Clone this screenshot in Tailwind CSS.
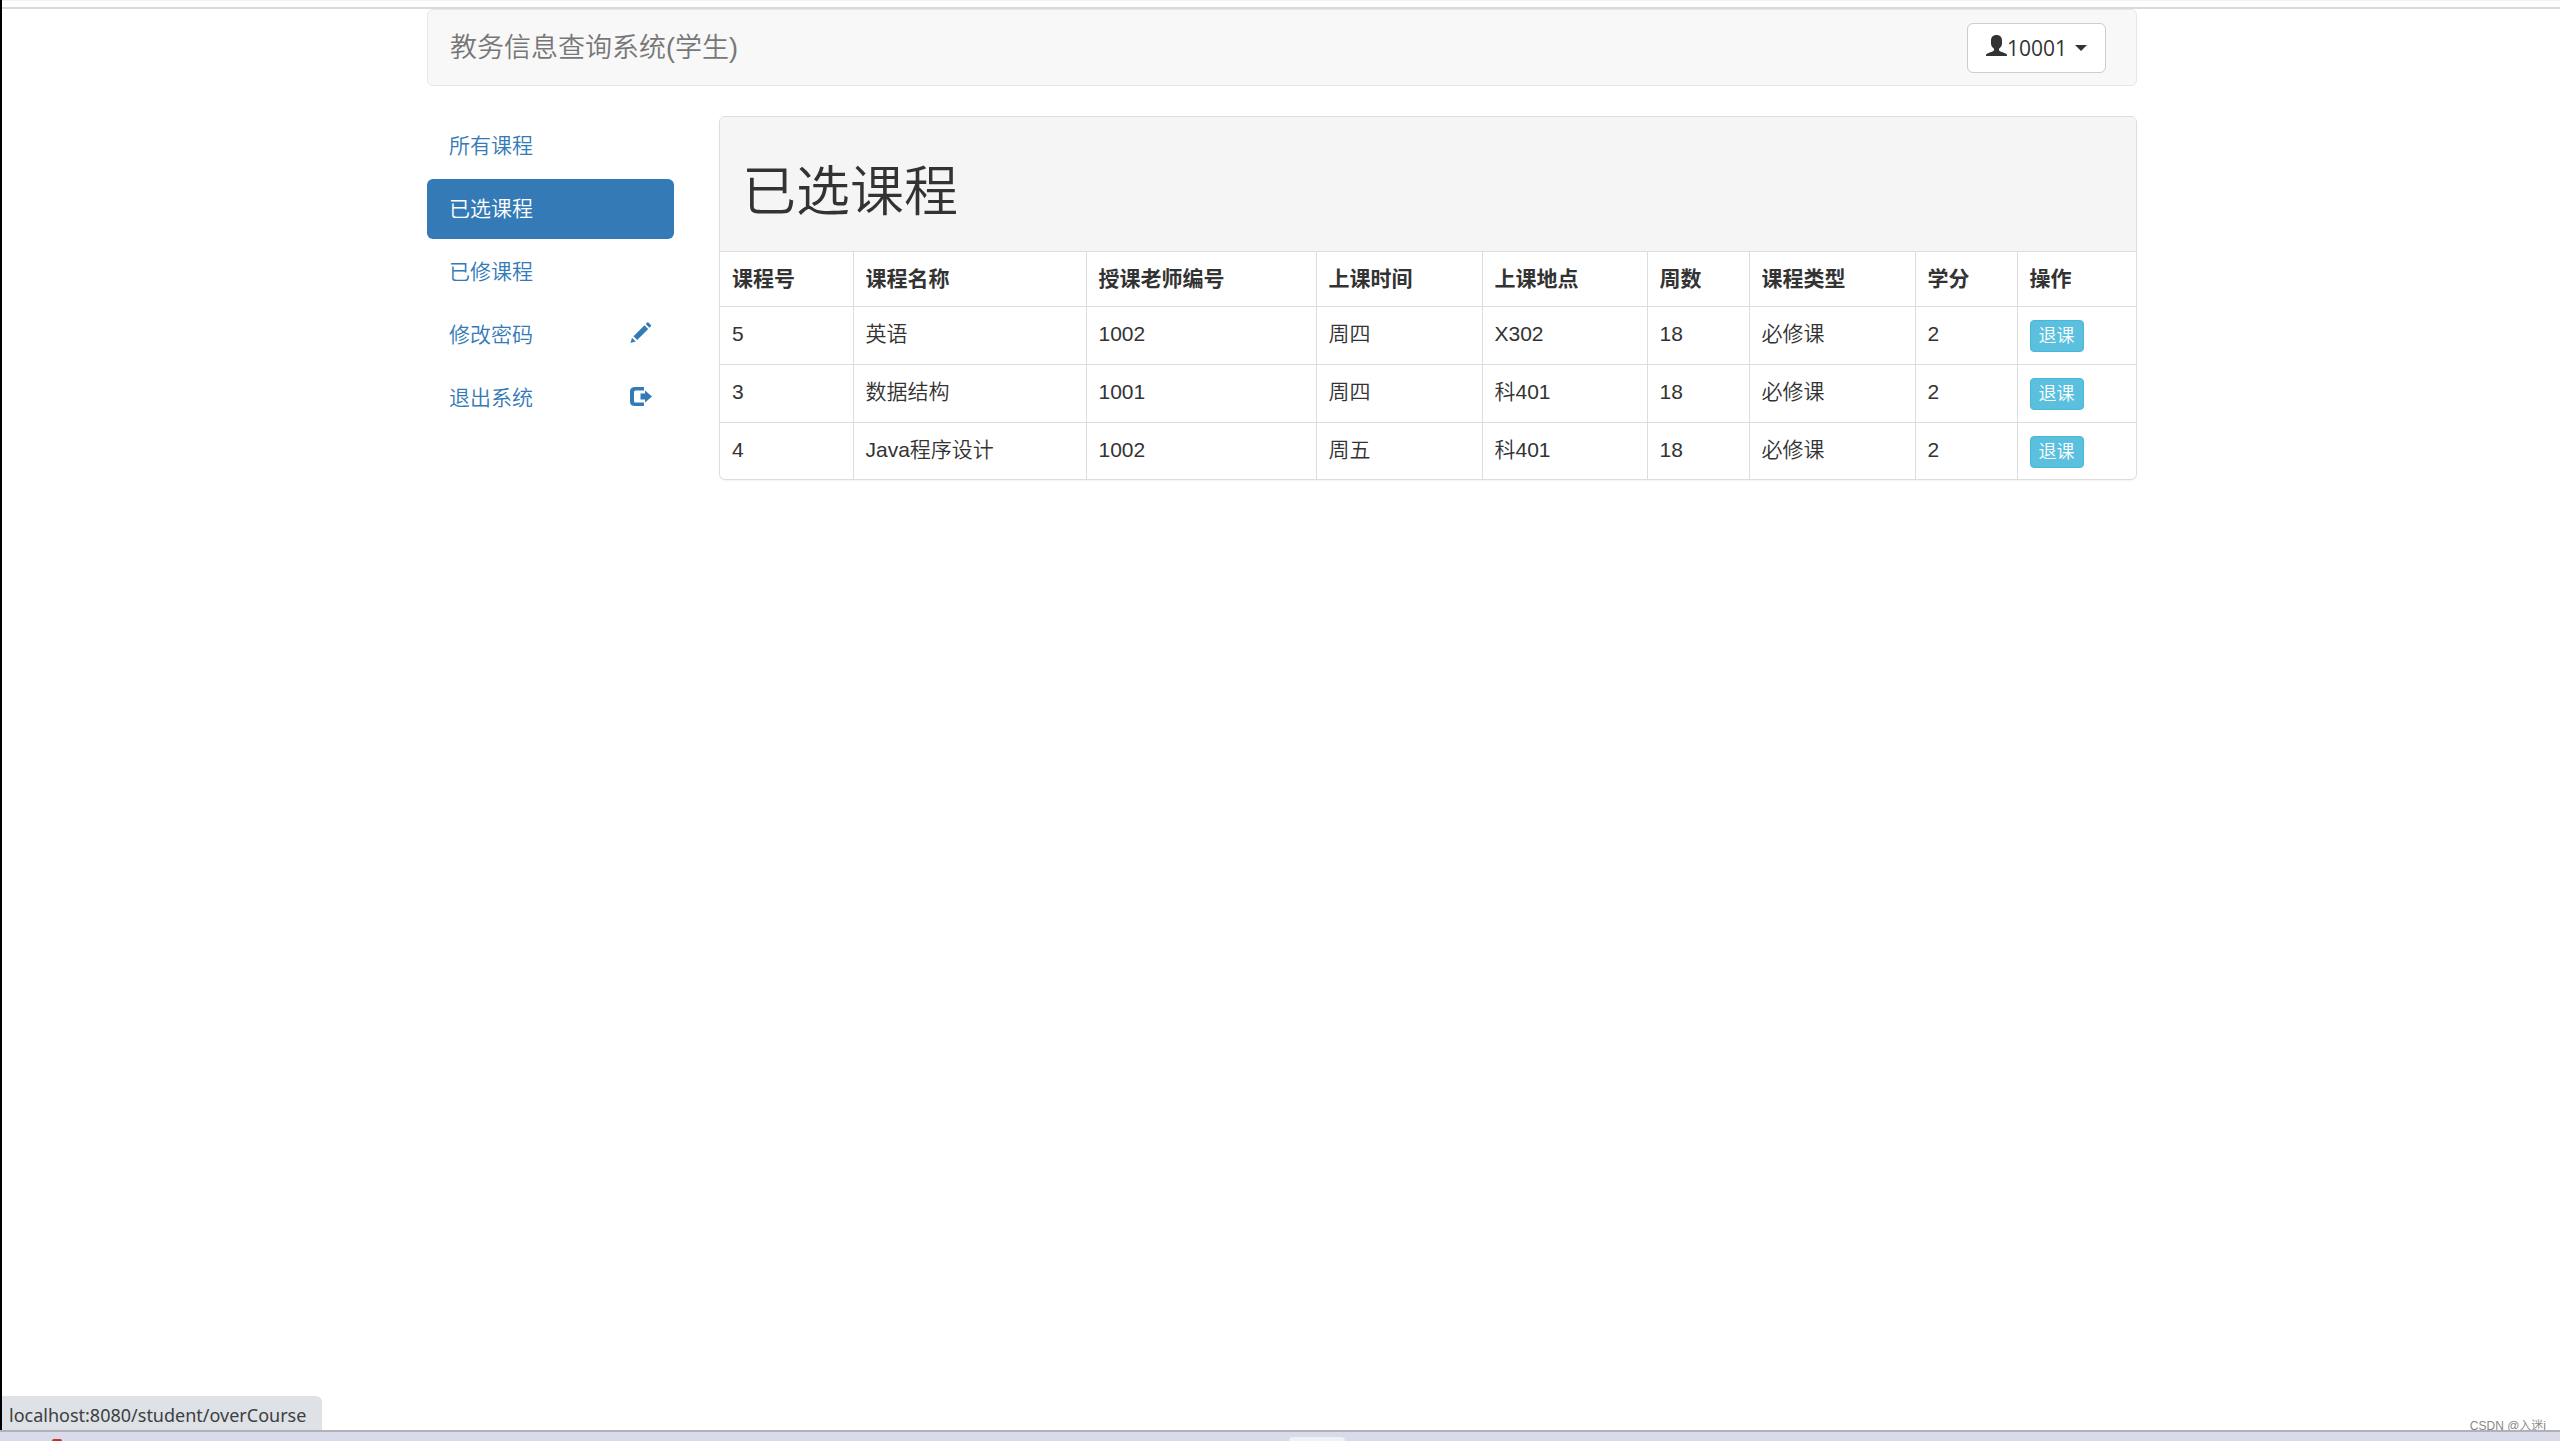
<!DOCTYPE html>
<html lang="zh-CN">
<head>
<meta charset="utf-8">
<meta name="viewport" content="width=device-width, initial-scale=1">
<title>教务信息查询系统(学生)</title>
<script src="https://cdn.jsdelivr.net/npm/@tailwindcss/browser@4"></script>
</head>
<body class="flex min-h-screen flex-col bg-white font-['Liberation_Sans','Noto_Sans_CJK_SC',sans-serif] text-[21px] leading-[30px] font-[350] text-[#333333]">
<div class="flex grow flex-col border-l-2 border-black">
  <div class="h-[9px] border-t border-b-2 border-t-[#f2f2f2] border-b-[#dadada]"></div>

  <div class="flex grow flex-col pl-0.5">
    <div class="mx-auto w-full max-w-[1710px]">
      <nav class="flex h-[77px] items-center justify-between rounded-md border border-[#e7e7e7] bg-[#f8f8f8] pr-[30px] pl-[22px]">
        <a href="#" class="text-[27px] text-[#777777]">教务信息查询系统(学生)</a>
        <button type="button" class="flex h-[50px] items-center rounded-md border border-[#cccccc] bg-white px-[18px] font-['Open_Sans',sans-serif] font-normal">
          <svg class="mb-1 h-[21px] w-[21px]" viewBox="0 0 21 21" fill="currentColor" aria-hidden="true"><path d="M10.500 0C14 0 16 2.200 16 5.500V8.500C16 11 14.500 12.500 13 13.800V15C13 15.800 13.500 16 14.500 16.400C17.500 17.500 21 18.500 21 20V21H0V20C0 18.500 3.500 17.500 6.500 16.400C7.500 16 8 15.800 8 15V13.800C6.500 12.500 5 11 5 8.500V5.500C5 2.200 7 0 10.500 0Z"/></svg>
          <span>10001</span>
          <svg class="ml-2 h-1.5 w-3" viewBox="0 0 12 6" fill="currentColor" aria-hidden="true"><path d="M0 0H12L6 6Z"/></svg>
        </button>
      </nav>

      <div class="mt-[30px] flex items-start gap-[45px]">
        <ul class="flex w-[247px] shrink-0 flex-col gap-[3px] text-[#337ab7]">
          <li><a href="#" class="flex h-[60px] items-center rounded-md px-[22px]">所有课程</a></li>
          <li><a href="#" class="flex h-[60px] items-center rounded-md bg-[#337ab7] px-[22px] text-white">已选课程</a></li>
          <li><a href="#" class="flex h-[60px] items-center rounded-md px-[22px]">已修课程</a></li>
          <li><a href="#" class="flex h-[60px] items-center justify-between rounded-md px-[22px]">修改密码
            <svg class="mb-1.5 h-[21px] w-[22px]" viewBox="0 0 21 21" fill="currentColor" aria-hidden="true"><path d="M0 21L1.500 15.800L5.200 19.500ZM3 14.300L14 3.300L17.700 7L6.700 18ZM15.200 2.100L16.700.6Q17.300 0 17.900.6L20.400 3.100Q21 3.700 20.400 4.300L18.900 5.800Z"/></svg></a></li>
          <li><a href="#" class="flex h-[60px] items-center justify-between rounded-md px-[22px]">退出系统
            <svg class="mb-1 h-[19px] w-[22px]" viewBox="0 0 22 19" fill="currentColor" aria-hidden="true"><path d="M5 0H14V3.500H5.500Q4 3.500 4 5V14Q4 15.500 5.500 15.500H14V19H5Q0 19 0 14.500V4.500Q0 0 5 0ZM15 3.500L22 9.500L15 15.500V12.500H10.500V6.500H15Z"/></svg></a></li>
        </ul>

        <section class="min-w-0 flex-1 overflow-hidden rounded-md border border-[#dddddd] shadow-xs">
          <div class="flex h-[134px] items-center bg-[#f5f5f5] px-[22px] pt-4">
            <h1 class="text-[54px] leading-[60px]">已选课程</h1>
          </div>
          <table class="w-full table-fixed border-collapse text-left [&_td]:border-t [&_td]:border-l [&_td]:border-[#dddddd] [&_td]:px-3 [&_td]:align-top [&_td]:pt-3 [&_td:first-child]:border-l-0 [&_th]:border-t [&_th]:border-l [&_th]:border-[#dddddd] [&_th]:px-3 [&_th]:py-3 [&_th]:font-bold [&_th:first-child]:border-l-0">
            <colgroup>
              <col class="w-[133px]"><col class="w-[233px]"><col class="w-[230px]"><col class="w-[166px]"><col class="w-[165px]"><col class="w-[102px]"><col class="w-[166px]"><col class="w-[102px]"><col>
            </colgroup>
            <thead>
              <tr><th scope="col">课程号</th><th scope="col">课程名称</th><th scope="col">授课老师编号</th><th scope="col">上课时间</th><th scope="col">上课地点</th><th scope="col">周数</th><th scope="col">课程类型</th><th scope="col">学分</th><th scope="col">操作</th></tr>
            </thead>
            <tbody>
              <tr class="h-[58px]"><td>5</td><td>英语</td><td>1002</td><td>周四</td><td>X302</td><td>18</td><td>必修课</td><td>2</td><td><button type="button" class="mt-px flex h-8 items-center rounded-sm border border-[#46b8da] bg-[#5bc0de] px-2 text-lg text-white">退课</button></td></tr>
              <tr class="h-[58px]"><td>3</td><td>数据结构</td><td>1001</td><td>周四</td><td>科401</td><td>18</td><td>必修课</td><td>2</td><td><button type="button" class="mt-px flex h-8 items-center rounded-sm border border-[#46b8da] bg-[#5bc0de] px-2 text-lg text-white">退课</button></td></tr>
              <tr class="h-14"><td>4</td><td>Java程序设计</td><td>1002</td><td>周五</td><td>科401</td><td>18</td><td>必修课</td><td>2</td><td><button type="button" class="mt-px flex h-8 items-center rounded-sm border border-[#46b8da] bg-[#5bc0de] px-2 text-lg text-white">退课</button></td></tr>
            </tbody>
          </table>
        </section>
      </div>
    </div>
  </div>

  <div class="flex items-end justify-between">
    <div class="flex h-[34px] items-center rounded-tr-md bg-[#dee1e6] pt-1 pr-4 pl-[7px] font-['Noto_Sans','Open_Sans',sans-serif] text-lg font-normal text-[#3c4043]">localhost:8080/student/overCourse</div>
    <div class="pr-3.5 text-xs leading-2 text-[#888888]">CSDN @入迷i</div>
  </div>
</div>
<footer class="flex h-[11px] items-end overflow-hidden border-t-2 border-[#afb0b9] bg-[#d9dbea]">
  <div class="ml-[52px] h-0.5 w-2.5 rounded-t-full bg-[#c9302c]"></div>
  <div class="ml-[1227px] h-1 w-[56px] rounded-t-sm bg-[#eff0f8]"></div>
</footer>
</body>
</html>
